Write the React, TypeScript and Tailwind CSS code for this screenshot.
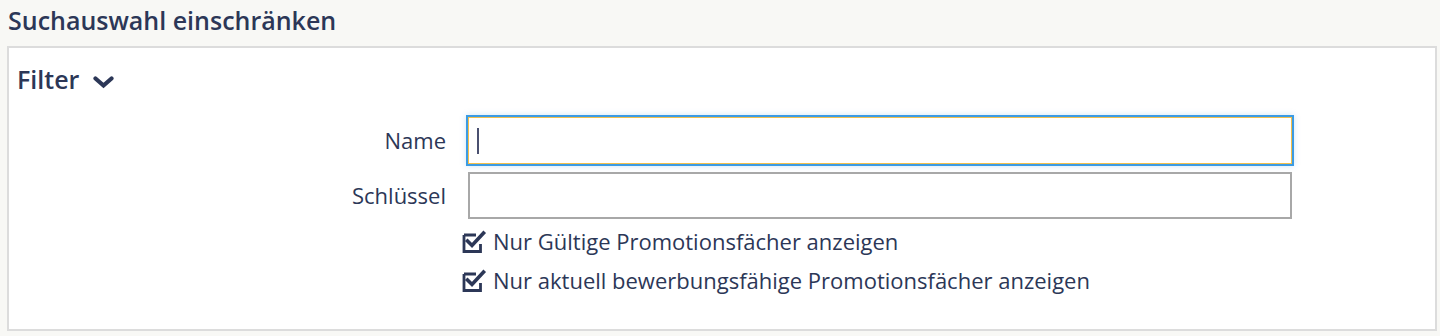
import React from 'react';

const font = { fontFamily: '"Open Sans", "Noto Sans", sans-serif' };

function CheckIcon() {
  return (
    <svg width="26" height="24" viewBox="0 0 26 24" className="shrink-0">
      <path d="M3 5 H15 M3 5 V21.5 H19.5 V14" fill="none" stroke="#2c3757" strokeWidth="2.8" strokeLinejoin="miter" />
      <path d="M6.5 11 L11 15.5 L22.5 3" fill="none" stroke="#2c3757" strokeWidth="3.6" strokeLinecap="square" />
    </svg>
  );
}

function CheckRow({ label }: { label: string }) {
  return (
    <label className="flex items-center gap-[6px] h-[39px] text-[22px] text-[#2c3757] cursor-pointer">
      <CheckIcon />
      <span>{label}</span>
    </label>
  );
}

export default function App() {
  return (
    <div className="w-[1440px] h-[336px] bg-[#f8f8f5] overflow-hidden" style={font}>
      <h2 className="h-[40px] pl-2 pt-[4px] text-[25px] font-semibold leading-[32px] text-[#2c3757]">
        Suchauswahl einschränken
      </h2>
      <div className="ml-[7px] mr-[3px] mt-[6px] h-[285px] bg-white border-2 border-[#dcdcdc]">
        <div className="flex items-center gap-[14px] pl-2 pt-[13px] h-[48px]">
          <span className="text-[25px] font-semibold leading-[32px] text-[#2c3757]">Filter</span>
          <svg width="21" height="13" viewBox="0 0 21 13" className="mt-[7px]">
            <path d="M2.5 2.5 L10.5 9.5 L18.5 2.5" fill="none" stroke="#2c3757" strokeWidth="4.2" strokeLinecap="round" strokeLinejoin="miter" />
          </svg>
        </div>
        <div className="grid grid-cols-[437px_824px] gap-x-[22px] gap-y-[8px] mt-[21px]">
          <label className="flex items-center justify-end text-[22px] text-[#2c3757]">Name</label>
          <div className="h-[47px] border border-[#f2bf4a] shadow-[0_0_0_2px_#3b9be3,0_0_6px_2px_rgba(59,155,227,0.25)] flex items-center px-2">
            <span className="w-[2px] h-[26px] bg-[#4a5070]" />
          </div>
          <label className="flex items-center justify-end text-[22px] text-[#2c3757]">Schlüssel</label>
          <div className="h-[47px] border-2 border-[#a8a8a8]" />
        </div>
        <div className="ml-[452px] mt-[3px] flex flex-col">
          <CheckRow label="Nur Gültige Promotionsfächer anzeigen" />
          <CheckRow label="Nur aktuell bewerbungsfähige Promotionsfächer anzeigen" />
        </div>
      </div>
    </div>
  );
}
